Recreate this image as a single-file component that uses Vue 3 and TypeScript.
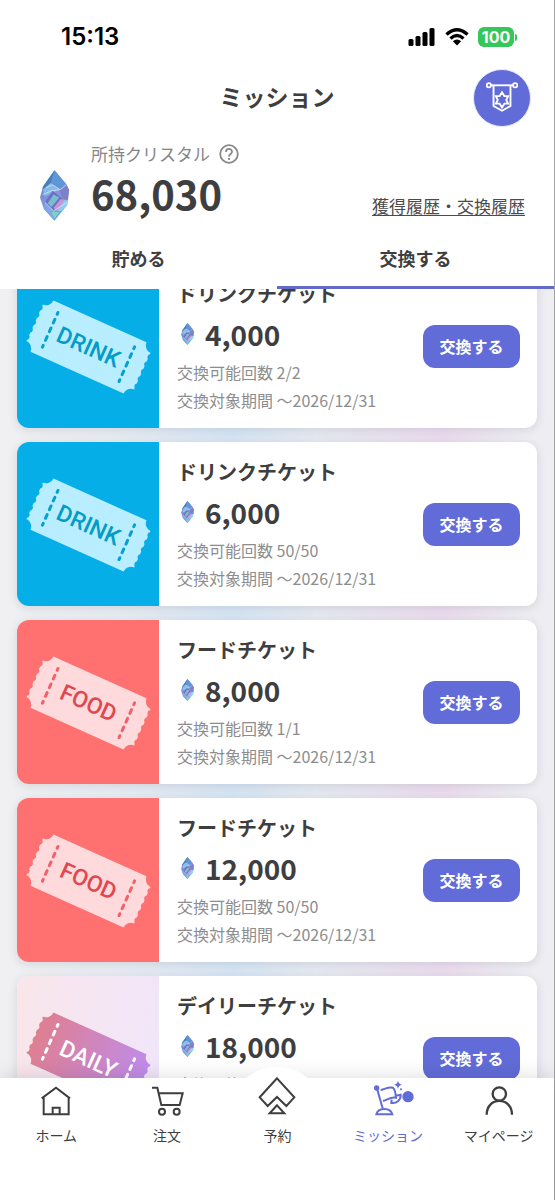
<script setup lang="ts">
import { onMounted, ref } from 'vue'

type Kind = 'drink' | 'food' | 'daily'

interface Reward {
  id: number
  kind: Kind
  label: string
  title: string
  price: number
  remaining: string
  until: string
}

const balance = 68030

const rewards: Reward[] = [
  { id: 1, kind: 'drink', label: 'DRINK', title: 'ドリンクチケット', price: 4000, remaining: '2/2', until: '2026/12/31' },
  { id: 2, kind: 'drink', label: 'DRINK', title: 'ドリンクチケット', price: 6000, remaining: '50/50', until: '2026/12/31' },
  { id: 3, kind: 'food', label: 'FOOD', title: 'フードチケット', price: 8000, remaining: '1/1', until: '2026/12/31' },
  { id: 4, kind: 'food', label: 'FOOD', title: 'フードチケット', price: 12000, remaining: '50/50', until: '2026/12/31' },
  { id: 5, kind: 'daily', label: 'DAILY', title: 'デイリーチケット', price: 18000, remaining: '1/1', until: '2026/12/31' },
]

const format = (n: number): string => n.toLocaleString('en-US')

// Ticket outline: concave corners and five small bites down each short side.
const bites = (dir: 1 | -1): string =>
  Array.from({ length: 5 }, () => `v${1.5 * dir} a3 3 0 0 0 0 ${5 * dir} v${1.5 * dir}`).join(' ')
const ticketPath = `M-51 -28 H51 A8 8 0 0 0 59 -20 ${bites(1)} A8 8 0 0 0 51 28 H-51 A8 8 0 0 0 -59 20 ${bites(-1)} A8 8 0 0 0 -51 -28 Z`

const list = ref<HTMLElement | null>(null)
onMounted(() => {
  if (list.value) list.value.scrollTop = 39
})
</script>

<template>
  <div class="app">
    <svg class="defs" aria-hidden="true">
      <defs>
        <linearGradient id="crystal-fill" x1="0" y1="0" x2="1" y2="1">
          <stop offset="0" stop-color="#5b8fd0" />
          <stop offset="0.5" stop-color="#8a94da" />
          <stop offset="1" stop-color="#62b4e2" />
        </linearGradient>
        <linearGradient id="daily-fill" x1="0" y1="0" x2="1" y2="0">
          <stop offset="0" stop-color="#df7f90" />
          <stop offset="1" stop-color="#bf8cec" />
        </linearGradient>
        <symbol id="crystal" viewBox="0 0 30 52">
          <path d="M15 0 L27 14 L30 20 L28 36 L15 52 L4 40 L0 28 L3 17 Z" fill="url(#crystal-fill)" />
          <path d="M15 0 L27 14 L20 20 L11 13 Z" fill="#5f97d6" />
          <path d="M15 0 L11 13 L3 20 L3 17 Z" fill="#4580b8" />
          <path d="M11 13 L20 20 L5 27 L3 20 Z" fill="#86b8e8" />
          <path d="M13 21 L23 29 L14 42 L5 33 Z" fill="#6d70c4" />
          <path d="M14 25 L20 28 L12 38 L8 34 Z" fill="#79bccb" />
          <path d="M20 20 L27 14 L30 20 L29 31 L23 29 Z" fill="#7d7fc9" />
          <path d="M21 30 L25 31 L18 42 L14 39 Z" fill="#cc93d6" />
          <path d="M5 33 L14 42 L15 52 L4 40 Z" fill="#7fa6e6" />
          <path d="M25 31 L29 31 L28 36 L22 42 L18 42 Z" fill="#8fcdf0" />
          <path d="M12 43 L20 43 L15 50 Z" fill="#7bd4c0" />
          <path d="M6 18 L13 15 L21 20 L27 15 M3 25 L12 21 L20 20 M5 33 L14 42 L28 33" fill="none" stroke="#d6e8fa" stroke-width="0.800" />
        </symbol>
      </defs>
    </svg>

    <header class="header">
      <div class="status">
        <time class="clock">15:13</time>
        <div class="indicators">
          <svg class="signal" viewBox="0 0 27 18" aria-hidden="true">
            <rect x="0" y="11" width="5" height="7" rx="1.5" />
            <rect x="7" y="8" width="5" height="10" rx="1.5" />
            <rect x="14" y="4" width="5" height="14" rx="1.5" />
            <rect x="21" y="0" width="5" height="18" rx="1.5" />
          </svg>
          <svg class="wifi" viewBox="0 0 24 18" aria-hidden="true">
            <path d="M1.500 6.500 Q12 -3 22.500 6.500 M5.500 10.500 Q12 4.500 18.500 10.500" fill="none" stroke="#000" stroke-width="3.400" />
            <path d="M12 17.500 L7.800 13.300 Q12 9.800 16.200 13.300 Z" />
          </svg>
          <div class="battery"><span class="level">100</span><span class="cap"></span></div>
        </div>
      </div>

      <div class="title-row">
        <h1 class="title">ミッション</h1>
        <button class="badge-button" type="button" aria-label="バッジ">
          <svg viewBox="14 18 68 68" fill="none" stroke="#fff" stroke-width="4" aria-hidden="true">
            <path d="M25 25 H71" />
            <circle cx="20" cy="25" r="4.500" />
            <circle cx="76" cy="25" r="4.500" />
            <path d="M30 25 V69 L48 79 L66 69 V25" />
            <path d="M48 40 L53 48 H61 L57 56 L61 64 H53 L48 72 L43 64 H35 L39 56 L35 48 H43 Z" />
          </svg>
        </button>
      </div>

      <div class="balance">
        <svg class="crystal-large" aria-hidden="true"><use href="#crystal" /></svg>
        <div class="amount">
          <div class="amount-label">
            <span>所持クリスタル</span>
            <button class="help" type="button" aria-label="ヘルプ">
              <svg viewBox="0 0 20 20" fill="none" stroke="#888" stroke-width="1.800" aria-hidden="true">
                <circle cx="10" cy="10" r="8.800" />
                <path d="M7 8 C7 4 13 4 13 7.800 C13 10 10 9.900 10 12.500" />
                <path d="M10 14 V16" />
              </svg>
            </button>
          </div>
          <strong class="amount-value">{{ format(balance) }}</strong>
        </div>
        <a class="history" href="#history">獲得履歴・交換履歴</a>
      </div>

      <div class="tabs" role="tablist">
        <button class="tab" type="button" role="tab" aria-selected="false">貯める</button>
        <button class="tab active" type="button" role="tab" aria-selected="true">交換する</button>
      </div>
    </header>

    <main ref="list" class="list">
      <article v-for="r in rewards" :key="r.id" class="card">
        <div class="art" :class="r.kind">
          <svg viewBox="0 0 142 164" role="img" :aria-label="r.label">
            <g transform="translate(71.500 83) rotate(24.200)">
              <path class="paper" :d="ticketPath" />
              <path class="perforation" d="M-42 -19 V19 M42 -19 V19" />
              <text class="ticket-text" y="8" text-anchor="middle">{{ r.label }}</text>
            </g>
          </svg>
        </div>
        <div class="info">
          <h2 class="name">{{ r.title }}</h2>
          <div class="price">
            <svg class="crystal-small" aria-hidden="true"><use href="#crystal" /></svg>
            <span>{{ format(r.price) }}</span>
          </div>
          <p class="meta">交換可能回数 {{ r.remaining }}</p>
          <p class="meta">交換対象期間 〜{{ r.until }}</p>
        </div>
        <button class="exchange" type="button">交換する</button>
      </article>
    </main>

    <nav class="nav">
      <a class="nav-item" href="#home">
        <svg class="icon" viewBox="0 0 108 108" aria-hidden="true">
          <path d="M11 46 L54 14 L96 46 M17 42 V94 H92 V42 M44 94 V74 H65 V94" />
        </svg>
        <span>ホーム</span>
      </a>
      <a class="nav-item" href="#order">
        <svg class="icon" viewBox="0 0 108 108" aria-hidden="true">
          <path d="M9 14 H25 L37 66 H92 L101 31 H29" />
          <circle cx="39" cy="86" r="9" />
          <circle cx="83" cy="86" r="9" />
        </svg>
        <span>注文</span>
      </a>
      <a class="nav-item" href="#reserve">
        <svg class="icon" viewBox="0 0 108 108" aria-hidden="true">
          <path d="M54 -14 L106 43 L82 69 L54 42 L26 69 L2 43 Z M54 67 L76 91 H32 Z" />
        </svg>
        <span>予約</span>
      </a>
      <a class="nav-item current" href="#mission" aria-current="page">
        <svg class="icon" viewBox="0 0 108 108" aria-hidden="true">
          <circle class="solid" cx="20" cy="15" r="5" />
          <path d="M22 20 L38 76 M19 94 H67 Q63 78 43 78 Q23 78 19 94 Z" />
          <path d="M32 21 C45 20 53 10 69 14 C75 20 77 32 78 44 C63 40 53 50 39 54" />
          <path d="M78 38 L92 35 C93 50 81 62 64 60 L65 50" />
          <path class="solid spark" d="M84 -7 Q86 3 96 5 Q86 7 84 17 Q82 7 72 5 Q82 3 84 -7 Z" />
          <circle class="solid spark" cx="93" cy="19" r="3" />
          <circle class="solid spark" cx="114" cy="41" r="17" />
        </svg>
        <span>ミッション</span>
      </a>
      <a class="nav-item" href="#mypage">
        <svg class="icon" viewBox="0 0 108 108" aria-hidden="true">
          <g stroke-width="7">
            <circle cx="55" cy="33" r="20" />
            <path d="M17 95 C17 40 93 40 93 95" />
          </g>
        </svg>
        <span>マイページ</span>
      </a>
    </nav>
  </div>
</template>

<style>
body {
  margin: 0;
  background: #fff;
}
</style>

<style scoped>
.app {
  box-sizing: border-box;
  display: flex;
  flex-direction: column;
  height: 100vh;
  border-right: 1px solid #a2a2a4;
  background: #fff;
  color: #3e3e40;
  font-family: "Noto Sans CJK JP", "Noto Sans", sans-serif;
}

.app *,
.app *::before {
  box-sizing: border-box;
}

button {
  padding: 0;
  border: 0;
  background: none;
  color: inherit;
  font-family: inherit;
  cursor: pointer;
}

svg {
  display: block;
}

.defs {
  position: absolute;
  width: 0;
  height: 0;
}

.header {
  flex: none;
  background: #fff;
}

.status {
  display: flex;
  align-items: center;
  justify-content: space-between;
  height: 69px;
  padding: 5px 37px 0 61px;
}

.clock {
  color: #000;
  font: 600 24px/32px Inter, sans-serif;
}

.indicators {
  display: flex;
  align-items: center;
  gap: 9px;
}

.signal {
  width: 28px;
  height: 18px;
}

.wifi {
  width: 24px;
  height: 18px;
}

.battery {
  display: flex;
  align-items: center;
  gap: 1px;
}

.level {
  width: 36px;
  border-radius: 6px;
  background: #35c759;
  color: #fff;
  font: 700 16px/20px Inter, sans-serif;
  text-align: center;
}

.cap {
  width: 2px;
  height: 7px;
  border-radius: 0 2px 2px 0;
  background: #35c759;
}

.title-row {
  display: grid;
  grid-template-columns: 58px 1fr 58px;
  align-items: center;
  padding: 0 23px;
}

.title {
  grid-column: 2;
  margin: 0;
  padding-bottom: 4px;
  font-size: 23px;
  line-height: 32px;
  font-weight: 700;
  text-align: center;
}

.badge-button {
  display: grid;
  place-items: center;
  width: 58px;
  height: 58px;
  border: 1px solid #e4e8fb;
  border-radius: 50%;
  background: #626cd8;
}

.badge-button svg {
  width: 32px;
  height: 32px;
}

.balance {
  display: flex;
  padding: 14px 29px 7px 40px;
}

.crystal-large {
  flex: none;
  width: 29px;
  height: 51px;
  margin: 29px 22px 0 0;
}

.amount {
  flex: 1;
}

.amount-label {
  display: flex;
  align-items: center;
  gap: 9px;
  color: #858587;
  font-size: 17px;
  line-height: 26px;
}

.help svg {
  width: 20px;
  height: 20px;
}

.amount-value {
  display: block;
  padding-bottom: 4px;
  font-size: 40px;
  line-height: 52px;
  font-weight: 700;
}

.history {
  align-self: flex-end;
  margin-bottom: 4px;
  color: #4b4b4d;
  font-size: 17px;
  line-height: 26px;
  text-underline-offset: 2px;
}

.tabs {
  display: flex;
  height: 59px;
}

.tab {
  flex: 1;
  border-bottom: 3px solid transparent;
  font-size: 18px;
  font-weight: 700;
}

.tab.active {
  border-bottom-color: #626cc8;
}

.list {
  display: flex;
  flex: 1;
  flex-direction: column;
  gap: 14px;
  min-height: 0;
  padding: 14px 17px;
  overflow-y: auto;
  scrollbar-width: none;
  background: linear-gradient(90deg, #f0f0f2 0%, #e8edf2 20%, #d6e5f4 42%, #e6eaf1 57%, #ebdcee 80%, #ededf2 94%, #ededf2 100%);
}

.card {
  display: flex;
  flex: none;
  align-items: center;
  min-height: 164px;
  padding-right: 17px;
  border-radius: 12px;
  background: #fff;
  box-shadow: 0 2px 10px rgba(60, 60, 80, 0.14);
}

.art {
  flex: none;
  align-self: stretch;
  width: 142px;
  border-radius: 12px 0 0 12px;
}

.art svg {
  width: 142px;
  height: 164px;
}

.drink {
  background: #05aee6;
}

.food {
  background: #ff7070;
}

.daily {
  background: linear-gradient(100deg, #f9e6ea, #f0e5fb);
}

.drink .paper {
  fill: #b8eeff;
}

.food .paper {
  fill: #ffdadc;
}

.daily .paper {
  fill: url(#daily-fill);
}

.perforation {
  fill: none;
  stroke-width: 3px;
  stroke-linecap: round;
  stroke-dasharray: 2 5.5 4 5.5 4 5.5 4 5.5 2 5;
}

.drink .perforation {
  stroke: #05a0d2;
}

.food .perforation {
  stroke: #f2606a;
}

.daily .perforation {
  stroke: #fff;
}

.ticket-text {
  font: 500 23px Roboto, sans-serif;
}

.drink .ticket-text {
  fill: #049bc9;
}

.food .ticket-text {
  fill: #e04850;
}

.daily .ticket-text {
  fill: #fff;
}

.info {
  flex: 1;
  min-width: 0;
  padding-left: 18px;
}

.name {
  margin: 0;
  font-size: 20px;
  line-height: 32px;
  font-weight: 700;
}

.price {
  display: flex;
  align-items: center;
  gap: 11px;
  padding-left: 4px;
  font-size: 28px;
  line-height: 48px;
  font-weight: 700;
}

.crystal-small {
  width: 13px;
  height: 22px;
}

.meta {
  margin: 0;
  color: #8d8d8f;
  font-size: 16px;
  line-height: 28px;
  white-space: nowrap;
}

.exchange {
  flex: none;
  width: 97px;
  height: 43px;
  border-radius: 12px;
  background: #626cd8;
  color: #fff;
  font-size: 16px;
  font-weight: 700;
}

.nav {
  position: relative;
  z-index: 1;
  display: flex;
  flex: none;
  min-height: 122px;
  padding: 5px 0 0 1px;
  background: #fff;
  box-shadow: 0 0 20px rgba(0, 0, 0, 0.14);
}

.nav::before {
  content: "";
  position: absolute;
  top: -11px;
  left: 50%;
  width: 98px;
  height: 98px;
  border-radius: 50%;
  background: #fff;
  transform: translateX(-50%);
}

.nav-item {
  position: relative;
  display: flex;
  flex: 1;
  flex-direction: column;
  align-items: center;
  gap: 4px;
  color: #3e3e40;
  font-size: 14px;
  line-height: 24px;
  text-decoration: none;
  white-space: nowrap;
}

.nav-item.current {
  color: #626cd8;
}

.icon {
  width: 36px;
  height: 36px;
  overflow: visible;
  fill: none;
  stroke: currentColor;
  stroke-width: 6px;
}

.icon .solid {
  fill: currentColor;
}

.icon .spark {
  stroke: none;
}
</style>
